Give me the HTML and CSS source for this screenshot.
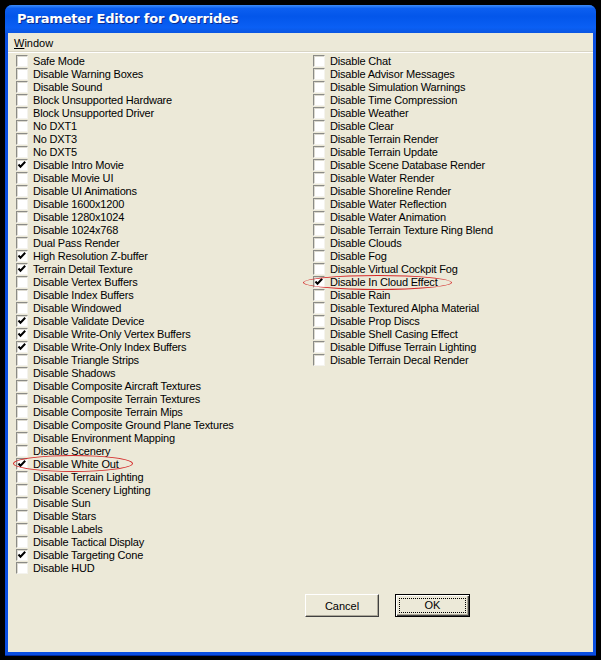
FILE: index.html
```html
<!DOCTYPE html>
<html lang="en">
<head>
  <meta charset="UTF-8">
  <title>Parameter Editor for Overrides</title>
  <link rel="stylesheet" href="styles.css">
</head>
<body>
  <div class="window">
    <div class="titlebar">Parameter Editor for Overrides</div>
    <div class="client">
      <div class="menubar"><span class="menu-item"><u>W</u>indow</span></div>

      <div class="lists">
        <ul class="checklist" id="left-list"></ul>
        <ul class="checklist" id="right-list"></ul>
      </div>

      <div class="buttons">
        <button class="btn">Cancel</button>
        <button class="btn btn-default"><span class="focus">OK</span></button>
      </div>

      <!-- red marker rings drawn over the two flags -->
      <div class="ring ring-whiteout"></div>
      <div class="ring ring-cloud"></div>
    </div>
  </div>

  <script>
    var leftItems = [
      ['Safe Mode', 0], ['Disable Warning Boxes', 0], ['Disable Sound', 0],
      ['Block Unsupported Hardware', 0], ['Block Unsupported Driver', 0],
      ['No DXT1', 0], ['No DXT3', 0], ['No DXT5', 0],
      ['Disable Intro Movie', 1], ['Disable Movie UI', 0], ['Disable UI Animations', 0],
      ['Disable 1600x1200', 0], ['Disable 1280x1024', 0], ['Disable 1024x768', 0],
      ['Dual Pass Render', 0], ['High Resolution Z-buffer', 1], ['Terrain Detail Texture', 1],
      ['Disable Vertex Buffers', 0], ['Disable Index Buffers', 0], ['Disable Windowed', 0],
      ['Disable Validate Device', 1], ['Disable Write-Only Vertex Buffers', 1],
      ['Disable Write-Only Index Buffers', 1], ['Disable Triangle Strips', 0],
      ['Disable Shadows', 0], ['Disable Composite Aircraft Textures', 0],
      ['Disable Composite Terrain Textures', 0], ['Disable Composite Terrain Mips', 0],
      ['Disable Composite Ground Plane Textures', 0], ['Disable Environment Mapping', 0],
      ['Disable Scenery', 0], ['Disable White Out', 1], ['Disable Terrain Lighting', 0],
      ['Disable Scenery Lighting', 0], ['Disable Sun', 0], ['Disable Stars', 0],
      ['Disable Labels', 0], ['Disable Tactical Display', 0],
      ['Disable Targeting Cone', 1], ['Disable HUD', 0]
    ];
    var rightItems = [
      ['Disable Chat', 0], ['Disable Advisor Messages', 0], ['Disable Simulation Warnings', 0],
      ['Disable Time Compression', 0], ['Disable Weather', 0], ['Disable Clear', 0],
      ['Disable Terrain Render', 0], ['Disable Terrain Update', 0],
      ['Disable Scene Database Render', 0], ['Disable Water Render', 0],
      ['Disable Shoreline Render', 0], ['Disable Water Reflection', 0],
      ['Disable Water Animation', 0], ['Disable Terrain Texture Ring Blend', 0],
      ['Disable Clouds', 0], ['Disable Fog', 0], ['Disable Virtual Cockpit Fog', 0],
      ['Disable In Cloud Effect', 1], ['Disable Rain', 0],
      ['Disable Textured Alpha Material', 0], ['Disable Prop Discs', 0],
      ['Disable Shell Casing Effect', 0], ['Disable Diffuse Terrain Lighting', 0],
      ['Disable Terrain Decal Render', 0]
    ];

    var tick = '<svg width="10" height="10" viewBox="0 0 10 10">' +
      '<path d="M1.5 4.5 L3.5 6.8 L8.2 1.8" fill="none" stroke="#000" stroke-width="2"/></svg>';

    function fill(id, items) {
      var ul = document.getElementById(id);
      items.forEach(function (it) {
        var li = document.createElement('li');
        li.innerHTML = '<span class="box">' + (it[1] ? tick : '') + '</span>' +
          '<span class="label">' + it[0] + '</span>';
        ul.appendChild(li);
      });
    }
    fill('left-list', leftItems);
    fill('right-list', rightItems);
  </script>
</body>
</html>
```

FILE: styles.css
```css
* {
  margin: 0;
  padding: 0;
  box-sizing: border-box;
}

body {
  background: #000;
  padding: 5px;
  font-family: "Liberation Sans", Arial, sans-serif;
  font-size: 11px;
  color: #000;
}

.window {
  width: 591px;
  height: 651px;
  background: #0a4ee0;
  border-radius: 7px 7px 0 0;
  padding: 0 3px 4px 3px;
  display: flex;
  flex-direction: column;
  box-shadow: inset 0 -1px 0 #002a9c;
}

.titlebar {
  height: 28px;
  margin: 0 -3px;
  padding: 6px 0 0 12px;
  border-radius: 7px 7px 0 0;
  background: linear-gradient(#3d8cf7 0%, #0c5ff0 12%, #0356ea 40%, #0a5ff4 80%, #0b56e2 100%);
  color: #fff;
  font-family: "DejaVu Sans", sans-serif;
  font-weight: bold;
  font-size: 13px;
  letter-spacing: -0.2px;
  text-shadow: 1px 1px 0 #0a2a8c;
}

.client {
  position: relative;
  flex: 1;
  background: #ece9d8;
}

.menubar {
  height: 20px;
  padding: 4px 0 0 6px;
  border-bottom: 1px solid #fff;
  box-shadow: 0 -1px 0 #d8d4c4 inset;
}

.lists {
  display: grid;
  grid-template-columns: 297px 1fr;
  padding: 1px 0 0 8px;
}

.checklist {
  list-style: none;
}

.checklist li {
  display: flex;
  align-items: center;
  height: 13px;
}

.box {
  width: 12px;
  height: 12px;
  flex: none;
  margin-right: 5px;
  background: #fff;
  border-top: 1px solid #8b8b86;
  border-left: 1px solid #8b8b86;
  border-right: 1px solid #f4f3ee;
  border-bottom: 1px solid #f4f3ee;
  box-shadow: inset 1px 1px 0 #dcdad0;
  display: flex;
  align-items: center;
  justify-content: center;
}

.label {
  white-space: nowrap;
  line-height: 13px;
  letter-spacing: -0.18px;
  padding-top: 1px;
}

.buttons {
  display: flex;
  gap: 16px;
  padding: 20px 0 0 297px;
}

.btn {
  height: 23px;
  font: inherit;
  background: #ece9d8;
  border-top: 1px solid #fff;
  border-left: 1px solid #fff;
  border-right: 1px solid #404040;
  border-bottom: 1px solid #404040;
  box-shadow: inset -1px -1px 0 #aca899;
  width: 74px;
}

.btn-default {
  width: 75px;
  border: 1px solid #000;
  box-shadow: inset 1px 1px 0 #fff, inset -1px -1px 0 #404040, inset -2px -2px 0 #aca899;
  padding: 3px;
}

.focus {
  display: block;
  height: 15px;
  line-height: 13px;
  border: 1px dotted #000;
}

.ring {
  position: absolute;
  border: 1.5px solid #d42a2a;
  border-radius: 50%;
}

.ring-whiteout {
  left: 5px;
  top: 422px;
  width: 120px;
  height: 17px;
}

.ring-cloud {
  left: 295px;
  top: 242px;
  width: 149px;
  height: 15px;
}
```
